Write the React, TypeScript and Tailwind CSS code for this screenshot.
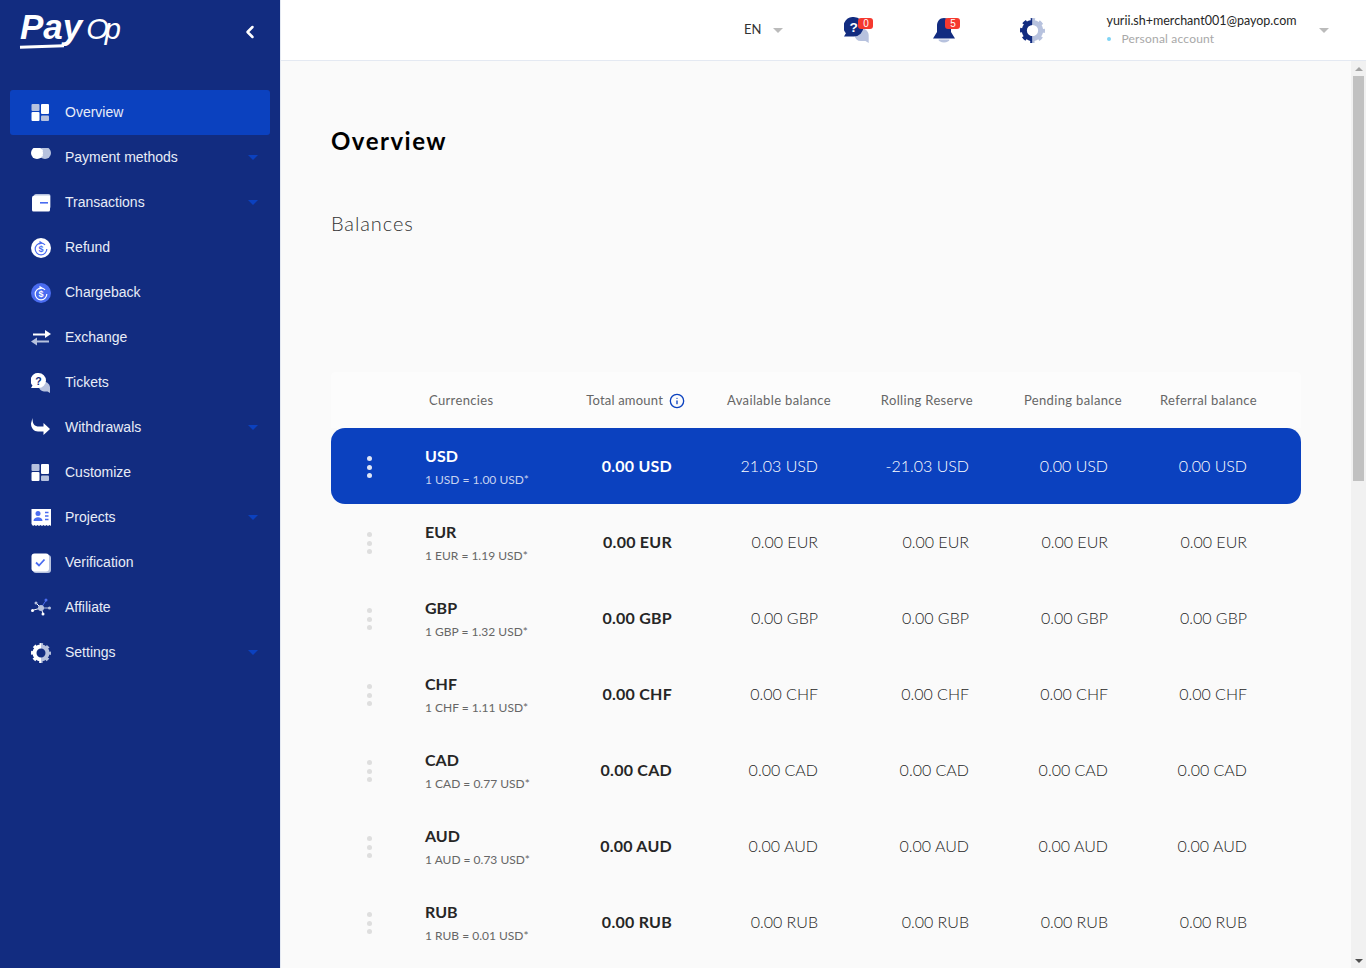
// App.tsx
// PayOp merchant dashboard: overview with balances table.

import { Info, ChevronLeft } from "lucide-react";
import type { ReactNode } from "react";

// ── Icons ──────────────────────────────────────────────────────────────────

const SOFT = "#b7c2de";
const BLUE = "#4a6cf0";

function IconBox({ children, size = 20 }: { children: ReactNode; size?: number }) {
  return (
    <svg width={size} height={size} viewBox="0 0 20 20" className="shrink-0">
      {children}
    </svg>
  );
}

const Tiles = () => (
  <IconBox>
    <rect x="0.5" y="1" width="8" height="7" rx="1" fill={SOFT} />
    <rect x="0.5" y="9" width="8" height="9" rx="1" fill="#fff" />
    <rect x="10" y="1" width="8" height="10" rx="1" fill="#fff" />
    <rect x="10" y="12.5" width="8" height="5.5" rx="1" fill={SOFT} />
  </IconBox>
);

const Pills = () => (
  <IconBox>
    <circle cx="14" cy="5" r="6" fill={SOFT} />
    <circle cx="6" cy="5" r="6" fill="#fff" />
    <path d="M10 2.2h2M10 5h2M10 7.8h2" stroke="#fff" strokeWidth="1" />
  </IconBox>
);

const Wallet = () => (
  <IconBox>
    <rect x="3" y="1" width="16.5" height="15" rx="2" fill={SOFT} />
    <path d="M3 2.5h15.5a.5.5 0 0 1 .5.5v14a1.5 1.5 0 0 1-1.5 1.5H2.5A1.5 1.5 0 0 1 1 17V5a2.5 2.5 0 0 1 2-2.5z" fill="#fff" />
    <rect x="9" y="9" width="8" height="1.6" fill={BLUE} />
  </IconBox>
);

const Coin = ({ bg, ring }: { bg: string; ring: string }) => (
  <IconBox>
    <circle cx="10" cy="10" r="10" fill={bg} />
    <circle cx="10" cy="11" r="5.8" fill="none" stroke={ring} strokeWidth="1.2" strokeDasharray="31 6" />
    <path d="M8.5 2.8l3 2-3 2z" fill={ring} />
    <text x="10" y="14" textAnchor="middle" fontSize="9" fontWeight="700" fill={ring} fontFamily="'Liberation Sans', sans-serif">$</text>
  </IconBox>
);

const Swap = () => (
  <IconBox>
    <path d="M2 6.500h14" stroke="#fff" strokeWidth="2" />
    <path d="M14 2L20 6l-6 4z" fill="#fff" />
    <path d="M18 13.500H4" stroke={SOFT} strokeWidth="2" />
    <path d="M6 9.500L0 13.500l6 4z" fill={SOFT} />
  </IconBox>
);

const Ask = ({ dark = false, size = 20 }: { dark?: boolean; size?: number }) => (
  <IconBox size={size}>
    <path d="M11 9a6 5.500 0 0 1 8 5v6l-2.500-1.500H13a5 5 0 0 1-5-5z" fill={SOFT} />
    <path d="M7.500 0a7.500 7.500 0 0 1 0 15H0l1.500-2.500A7.500 7.500 0 0 1 7.500 0z" fill={dark ? "#122c80" : "#fff"} />
    <text x="7.500" y="11.500" textAnchor="middle" fontSize="10.500" fontWeight="700" fill={dark ? "#fff" : "#122c80"} fontFamily="'Liberation Sans', sans-serif">?</text>
  </IconBox>
);

const TurnArrow = () => (
  <IconBox>
    <path d="M1.500 0c0 5 1 7.500 5 8.500h6V5l6.500 6-6.500 6v-3.500H7C3 13.500 0 10 0 5.500z" fill="#fff" />
  </IconBox>
);

const Card = () => (
  <IconBox>
    <rect x="0.500" y="1" width="19.500" height="15" fill="#fff" />
    <path d="M0.500 16h19.500v2l-1.500-1-1.500 1-1.500-1-1.500 1-1.500-1-1.500 1-1.500-1-1.500 1-1.500-1-1.500 1-1.500-1-1.500 1z" fill="#fff" />
    <circle cx="7" cy="5.500" r="2.500" fill={BLUE} />
    <path d="M2.500 13c0-5 9-5 9 0z" fill={BLUE} />
    <path d="M14 4.500h3.500M14 8h3.500M14 11.500h3.500" stroke={BLUE} strokeWidth="1.500" />
  </IconBox>
);

const Check = () => (
  <IconBox>
    <rect x="2" y="2" width="18" height="18" rx="3" fill={SOFT} />
    <rect x="0.500" y="0.500" width="17.500" height="18" rx="3" fill="#fff" />
    <path d="M5 9.500l3 3 5.500-6" fill="none" stroke={BLUE} strokeWidth="1.800" />
  </IconBox>
);

const Nodes = () => (
  <IconBox>
    <path d="M10 10L5 5M10 10L1 12.500M10 10L12 15.500" stroke="#fff" strokeWidth="1" />
    <path d="M10 10L15 2.500" stroke={BLUE} strokeWidth="1" />
    <path d="M10 10h8" stroke={SOFT} strokeWidth="1" />
    <circle cx="10" cy="10" r="3" fill={SOFT} />
    <circle cx="5" cy="5" r="1.500" fill={SOFT} />
    <circle cx="1.500" cy="12.500" r="1.500" fill="#fff" />
    <circle cx="12" cy="16" r="1.500" fill="#fff" />
    <circle cx="15" cy="2" r="1.500" fill={BLUE} />
    <circle cx="18.500" cy="10" r="1.500" fill={SOFT} />
  </IconBox>
);

function Gear({ left, right, id, size = 20 }: { left: string; right: string; id: string; size?: number }) {
  const shape = (
    <>
      <circle cx="10" cy="10" r="6.500" fill="none" stroke="currentColor" strokeWidth="4" />
      <circle cx="10" cy="10" r="8.500" fill="none" stroke="currentColor" strokeWidth="3" strokeDasharray="3.340 3.340" strokeDashoffset="1.670" />
    </>
  );
  return (
    <svg width={size} height={size} viewBox="0 0 20 20" className="shrink-0">
      <clipPath id={`${id}-l`}><rect x="0" y="0" width="10" height="20" /></clipPath>
      <clipPath id={`${id}-r`}><rect x="10" y="0" width="10" height="20" /></clipPath>
      <g clipPath={`url(#${id}-l)`} style={{ color: left }}>{shape}</g>
      <g clipPath={`url(#${id}-r)`} style={{ color: right }}>{shape}</g>
    </svg>
  );
}

const Caret = ({ className }: { className: string }) => (
  <span className={`h-0 w-0 border-x-[5px] border-t-[5px] border-x-transparent ${className}`} />
);

// ── Data ───────────────────────────────────────────────────────────────────

const NAV: { label: string; icon: ReactNode; caret?: boolean }[] = [
  { label: "Overview", icon: <Tiles /> },
  { label: "Payment methods", icon: <Pills />, caret: true },
  { label: "Transactions", icon: <Wallet />, caret: true },
  { label: "Refund", icon: <Coin bg="#fff" ring={BLUE} /> },
  { label: "Chargeback", icon: <Coin bg={BLUE} ring="#fff" /> },
  { label: "Exchange", icon: <Swap /> },
  { label: "Tickets", icon: <Ask /> },
  { label: "Withdrawals", icon: <TurnArrow />, caret: true },
  { label: "Customize", icon: <Tiles /> },
  { label: "Projects", icon: <Card />, caret: true },
  { label: "Verification", icon: <Check /> },
  { label: "Affiliate", icon: <Nodes /> },
  { label: "Settings", icon: <Gear left="#fff" right={SOFT} id="nav-gear" />, caret: true },
];

const ROWS = [
  { code: "USD", rate: "1 USD = 1.00 USD*", available: "21.03 USD", rolling: "-21.03 USD" },
  { code: "EUR", rate: "1 EUR = 1.19 USD*" },
  { code: "GBP", rate: "1 GBP = 1.32 USD*" },
  { code: "CHF", rate: "1 CHF = 1.11 USD*" },
  { code: "CAD", rate: "1 CAD = 0.77 USD*" },
  { code: "AUD", rate: "1 AUD = 0.73 USD*" },
  { code: "RUB", rate: "1 RUB = 0.01 USD*" },
];

// ── Parts ──────────────────────────────────────────────────────────────────

function Sidebar() {
  return (
    <aside className="flex h-full w-[280px] shrink-0 flex-col bg-[#122c80] font-['Liberation_Sans',sans-serif]">
      <div className="flex h-[90px] items-start justify-between px-[20px]">
        <div className="relative mt-[7px] flex h-[40px] items-baseline text-[35px] italic leading-[40px] text-white">
          <span className="font-bold">Pay</span>
          <span className="ml-[4px] text-[29px] tracking-[-4px]">Op</span>
          <span className="absolute bottom-[-1px] left-0 h-[3px] w-[44px] -rotate-2 bg-white" />
        </div>
        <ChevronLeft className="mt-[22px] text-white" size={20} strokeWidth={3} />
      </div>
      <nav className="flex flex-col px-[10px]">
        {NAV.map((item, i) => (
          <div
            key={item.label}
            className={`flex h-[45px] items-center rounded-[3px] pl-[21px] pr-[12px] ${i === 0 ? "bg-[#0b41bf]" : ""}`}
          >
            {item.icon}
            <span className="ml-[14px] text-[14px] text-[#e8ecf7]">{item.label}</span>
            {item.caret && <Caret className="ml-auto border-t-[#0b41bf]" />}
          </div>
        ))}
      </nav>
    </aside>
  );
}

function Badge({ children, className }: { children: ReactNode; className: string }) {
  return (
    <span className={`absolute top-[1px] h-[11px] w-[15px] rounded-[3px] bg-[#f5392f] text-center font-['Liberation_Sans',sans-serif] text-[10px] leading-[11px] text-white ${className}`}>
      {children}
    </span>
  );
}

function Topbar() {
  return (
    <header className="flex h-[61px] shrink-0 items-center border-b border-[#e4e9f2] bg-white pl-[463px] font-['Lato',sans-serif]">
      <span className="text-[13px] text-[#333]">EN</span>
      <Caret className="ml-[12px] border-t-[#bbb]" />
      <div className="relative ml-[61px] h-[26px] w-[26px]">
        <Ask dark size={26} />
        <Badge className="left-[14px]">0</Badge>
      </div>
      <div className="relative ml-[62px] h-[26px] w-[24px]">
        <svg width="24" height="26" viewBox="0 0 24 26">
          <path d="M12 1c-4.500 0-7 3.500-7 8v6l-4 6.500h22l-4-6.500V9c0-4.500-2.500-8-7-8z" fill="#122c80" />
          <path d="M6.500 22.500h11a5.500 3 0 0 1-11 0z" fill={SOFT} />
        </svg>
        <Badge className="left-[13px]">5</Badge>
      </div>
      <div className="ml-[64px]">
        <Gear left="#122c80" right={SOFT} id="top-gear" size={25} />
      </div>
      <div className="ml-[61px] flex flex-col">
        <span className="text-[12.500px] leading-[18px] text-[#262626]">yurii.sh+merchant001@payop.com</span>
        <span className="flex items-center text-[12px] leading-[18px] tracking-[0.200px] text-[#a8a8a8]">
          <span className="ml-[1px] h-[4px] w-[4px] rounded-full bg-[#7fd4f5]" />
          <span className="ml-[10px]">Personal account</span>
        </span>
      </div>
      <Caret className="ml-[22px] border-t-[#bbb]" />
    </header>
  );
}

function Scrollbar() {
  return (
    <div className="flex w-[15px] shrink-0 flex-col items-center bg-[#f1f1f1]">
      <div className="flex h-[15px] w-full items-center justify-center">
        <span className="h-0 w-0 border-x-[4px] border-b-[4px] border-x-transparent border-b-[#a3a3a3]" />
      </div>
      <div className="h-[405px] w-[11px] bg-[#c1c1c1]" />
      <div className="mt-auto flex h-[15px] w-full items-center justify-center">
        <span className="h-0 w-0 border-x-[4px] border-t-[4px] border-x-transparent border-t-[#505050]" />
      </div>
    </div>
  );
}

function BalancesTable() {
  return (
    <div className="w-[970px]">
      <div className="grid h-[56px] grid-cols-[94px_150px_110px_146px_142px_149px_135px_44px] items-center rounded-t-[4px] bg-[#fcfcfc] pt-[1px] text-right text-[13px] tracking-[0.350px] text-[#666]">
        <span />
        <span className="pl-[4px] text-left">Currencies</span>
        <span className="flex items-center justify-end gap-[6px]">
          <span className="whitespace-nowrap tracking-[0.200px]">Total amount</span>
          <Info size={16} strokeWidth={2} className="text-[#0b41bf]" />
        </span>
        <span>Available balance</span>
        <span>Rolling Reserve</span>
        <span>Pending balance</span>
        <span>Referral balance</span>
      </div>
      {ROWS.map((row, i) => {
        const active = i === 0;
        const zero = `0.00 ${row.code}`;
        return (
          <div
            key={row.code}
            className={`grid h-[76px] grid-cols-[94px_150px_97px_146px_151px_139px_139px_54px] items-center text-right text-[16px] font-light ${
              active ? "rounded-[14px] bg-[#0b41bf] text-white" : "text-[#262626]"
            }`}
          >
            <div className="mt-[2px] flex flex-col items-center gap-[3.300px] pr-[18px]">
              {[0, 1, 2].map((d) => (
                <span key={d} className={`h-[5px] w-[5px] rounded-full ${active ? "bg-[#dfe5f5]" : "bg-[#dedede]"}`} />
              ))}
            </div>
            <div className="pt-[1px] text-left">
              <div className={`text-[16px] font-bold leading-[20px] ${active ? "text-white" : "text-[#262626]"}`}>{row.code}</div>
              <div className={`mt-[6px] whitespace-nowrap text-[12px] font-normal leading-[16px] ${active ? "text-[#c6d2f0]" : "text-[#666]"}`}>{row.rate}</div>
            </div>
            <span className={`whitespace-nowrap font-bold tracking-[0.250px] ${active ? "" : "text-[#262626]"}`}>{zero}</span>
            <span className="whitespace-nowrap">{row.available ?? zero}</span>
            <span className="whitespace-nowrap">{row.rolling ?? zero}</span>
            <span className="whitespace-nowrap">{zero}</span>
            <span className="whitespace-nowrap">{zero}</span>
          </div>
        );
      })}
    </div>
  );
}

// ── Page ───────────────────────────────────────────────────────────────────

export default function App() {
  return (
    <div className="flex h-screen overflow-hidden bg-[#fafafa]">
      <Sidebar />
      <div className="flex min-w-0 flex-1 flex-col border-l border-[#e4e9f2]">
        <Topbar />
        <div className="flex min-h-0 flex-1">
          <main className="min-w-0 flex-1 overflow-hidden pl-[50px] pt-[65px] font-['Lato',sans-serif]">
            <h1 className="text-[24px] font-bold leading-[30px] tracking-[1.500px] text-black">Overview</h1>
            <h2 className="mt-[52px] text-[20px] font-light leading-[30px] tracking-[0.900px] text-[#333]">Balances</h2>
            <div className="mt-[134px]">
              <BalancesTable />
            </div>
          </main>
          <Scrollbar />
        </div>
      </div>
    </div>
  );
}
